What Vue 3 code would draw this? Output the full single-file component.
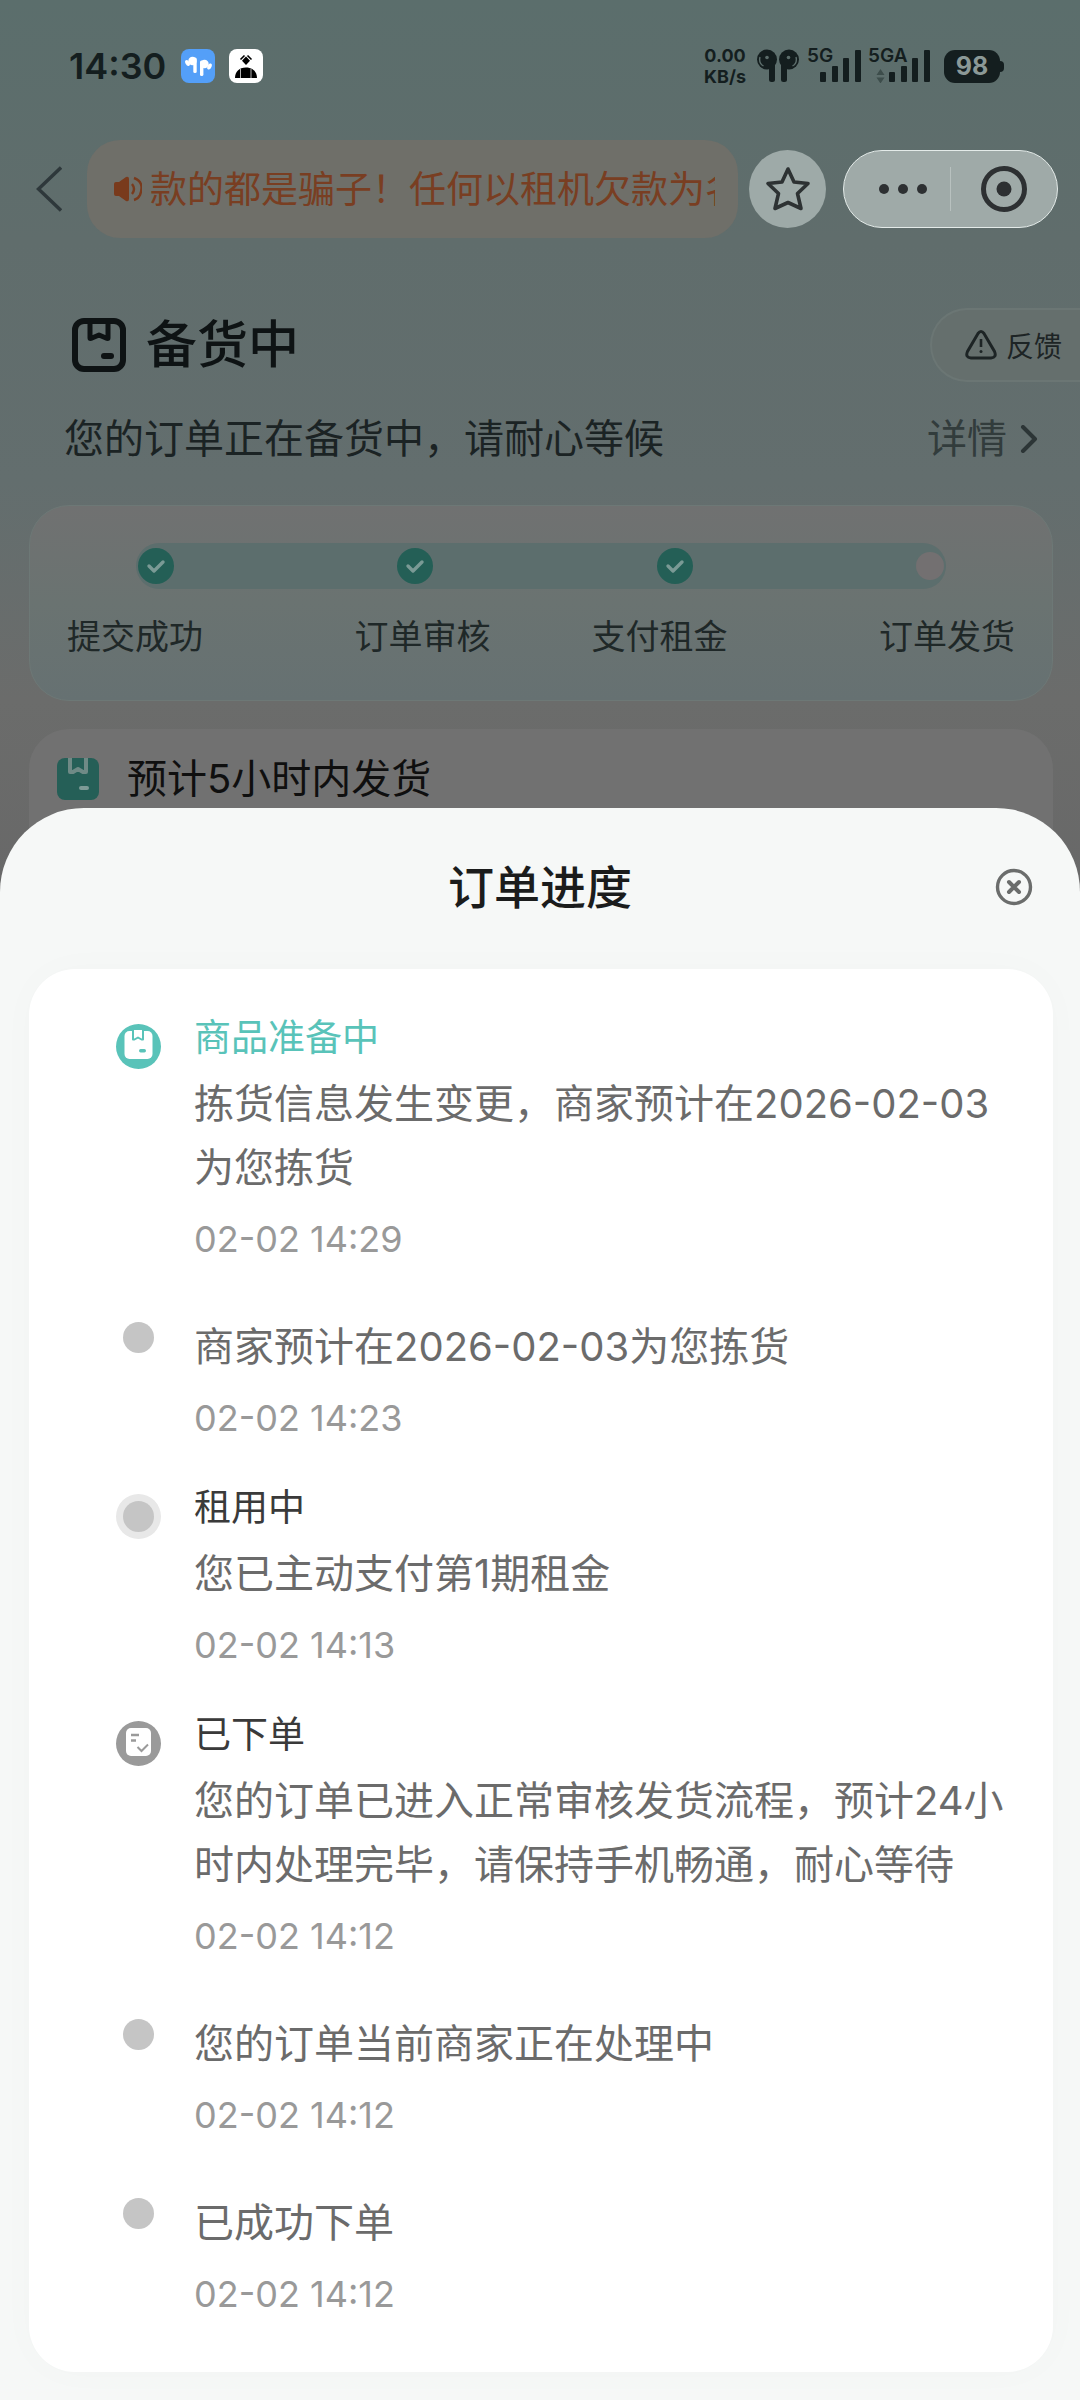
<script setup>
const steps = [
  { label: '提交成功', done: true },
  { label: '订单审核', done: true },
  { label: '支付租金', done: true },
  { label: '订单发货', done: false },
]

const records = [
  { marker: 'box', title: '商品准备中', active: true, text: '拣货信息发生变更，商家预计在2026-02-03为您拣货', time: '02-02 14:29' },
  { marker: 'dot', text: '商家预计在2026-02-03为您拣货', time: '02-02 14:23' },
  { marker: 'ring', title: '租用中', text: '您已主动支付第1期租金', time: '02-02 14:13' },
  { marker: 'note', title: '已下单', text: '您的订单已进入正常审核发货流程，预计24小时内处理完毕，请保持手机畅通，耐心等待', time: '02-02 14:12' },
  { marker: 'dot', text: '您的订单当前商家正在处理中', time: '02-02 14:12' },
  { marker: 'dot', text: '已成功下单', time: '02-02 14:12' },
]
</script>

<template>
  <div class="screen">
    <div class="status">
      <span class="clock">14:30</span>
      <svg class="app-icon" viewBox="0 0 34 34" aria-hidden="true">
        <rect width="34" height="34" rx="8" fill="#549ff8" />
        <g fill="#fff">
          <circle cx="11.5" cy="12" r="4.2" />
          <rect x="12.300" y="8.500" width="3.400" height="15.500" rx="1.600" />
          <ellipse cx="6.500" cy="14" rx="2" ry="3.200" transform="rotate(-30 6.500 14)" />
          <circle cx="23.500" cy="15" r="4.200" />
          <rect x="19" y="11.500" width="3.400" height="15.500" rx="1.600" />
          <ellipse cx="28.500" cy="17.500" rx="2" ry="3.200" transform="rotate(25 28.500 17.500)" />
        </g>
      </svg>
      <svg class="app-icon" viewBox="0 0 34 34" aria-hidden="true">
        <rect width="34" height="34" rx="8" fill="#fff" />
        <path d="M17 7.500l4 4.200-4 4.300-4-4.300z" fill="#000" />
        <path d="M11.500 10.500l4-4M22.500 10.500l-4-4" stroke="#000" stroke-width="1.600" />
        <path d="M6 29c0-6 4-10.500 11-10.500S28 23 28 29z" fill="#000" />
        <path d="M11.500 20v9M22 20v9" stroke="#fff" stroke-width=".7" />
      </svg>
      <span class="spacer"></span>
      <span class="rate"><span>0.00</span><span>KB/s</span></span>
      <svg class="buds" viewBox="0 0 44 34" aria-hidden="true">
        <g fill="#141e1f">
          <circle cx="11" cy="10.500" r="10" />
          <rect x="13" y="4" width="6" height="29" rx="2.500" />
          <circle cx="33" cy="10.500" r="10" />
          <rect x="25" y="4" width="6" height="29" rx="2.500" />
        </g>
        <g fill="none" stroke="#5c6d6b" stroke-width="1.400">
          <path d="M4 8c-1 4 0 7 3.500 9M40 8c1 4 0 7-3.500 9" />
        </g>
        <circle cx="11" cy="8.500" r="1.800" fill="#5c6d6b" />
        <circle cx="32.500" cy="8.500" r="1.800" fill="#5c6d6b" />
      </svg>
      <span class="signal five">
        <span class="net">5G</span>
        <svg viewBox="0 0 54 34" aria-hidden="true"><g fill="#141e1f"><rect x="13" y="23" width="6" height="10" rx="1" /><rect x="25" y="17" width="6" height="16" rx="1" /><rect x="36" y="9" width="6" height="24" rx="1" /><rect x="48" y="1" width="6" height="32" rx="1" /></g></svg>
      </span>
      <span class="signal adv">
        <span class="net">5GA</span>
        <svg viewBox="0 0 62 34" aria-hidden="true"><g fill="#141e1f"><rect x="21" y="23" width="6" height="10" rx="1" /><rect x="33" y="17" width="6" height="16" rx="1" /><rect x="44" y="9" width="6" height="24" rx="1" /><rect x="56" y="1" width="6" height="32" rx="1" /></g><path d="M8.500 26l4-6 4 6zM8.500 28.500l4 6 4-6z" fill="#3d4d4b" /></svg>
      </span>
      <span class="battery">98</span>
    </div>

    <header class="nav">
      <button class="back" aria-label="返回">
        <svg viewBox="0 0 26 46"><path d="M25 1.500L2.500 23 25 44.500" fill="none" stroke="#2e383b" stroke-width="3.400" /></svg>
      </button>
      <div class="notice">
        <svg viewBox="0 0 28 26" aria-hidden="true">
          <path d="M0 8q0-2 2-2h3l7-5q3-1 3 2v20q0 3-3 2l-7-5H2q-2 0-2-2z" fill="#793a1c" />
          <path d="M18 8q4 5 0 10M20 2q11 4 6 17-2 4-6 5" fill="none" stroke="#793a1c" stroke-width="2.400" />
        </svg>
        <p>款的都是骗子！任何以租机欠款为名</p>
      </div>
      <button class="star" aria-label="收藏">
        <svg viewBox="0 0 46 46"><path d="M23 3l6 13 14 1.500-10.500 10L36 42.500l-13-6-13 6 3.500-15L3 17.500 17 16z" fill="none" stroke="#2d3233" stroke-width="3.600" stroke-linejoin="round" /></svg>
      </button>
      <div class="capsule">
        <button class="more" aria-label="更多"><svg class="dots" viewBox="0 0 50 12"><circle cx="6" cy="6" r="5" /><circle cx="25" cy="6" r="5" /><circle cx="44" cy="6" r="5" /></svg></button>
        <i></i>
        <button class="exit" aria-label="关闭小程序"><svg class="target" viewBox="0 0 46 46"><circle cx="23" cy="23" r="20.500" fill="none" stroke="#2d3032" stroke-width="5" /><circle cx="23" cy="23" r="7.500" fill="#2d3032" /></svg></button>
      </div>
    </header>

    <section class="state">
      <svg class="state-icon" viewBox="0 0 54 54" aria-hidden="true">
        <rect x="3" y="3" width="48" height="48" rx="9" fill="none" stroke="#0e1314" stroke-width="6" />
        <path d="M18 4v16q0 1 2 0l7-3 7 3q2 1 2 0V4" fill="none" stroke="#0e1314" stroke-width="5" stroke-linejoin="round" />
        <rect x="29" y="35" width="13" height="6" rx="3" fill="#0e1314" />
      </svg>
      <h1>备货中</h1>
      <button class="feedback">
        <svg viewBox="0 0 32 30" aria-hidden="true"><path d="M13 3.500q3-4 6 0l10.500 18q2.500 6-3.500 6.500H6q-6-.5-3.500-6.500z" fill="none" stroke="#1d2425" stroke-width="3" /><path d="M16 9v8" stroke="#1d2425" stroke-width="2.600" /><circle cx="16" cy="21.500" r="1.500" fill="#1d2425" /></svg>
        反馈
      </button>
    </section>
    <div class="summary">
      <p>您的订单正在备货中，请耐心等候</p>
      <a href="#detail">详情<svg viewBox="0 0 18 28" aria-hidden="true"><path d="M3 2l12 12L3 26" fill="none" stroke="#2c3536" stroke-width="4" stroke-linecap="round" stroke-linejoin="round" /></svg></a>
    </div>

    <section class="card progress">
      <div class="track">
        <template v-for="s in steps" :key="s.label">
          <svg v-if="s.done" class="tick" viewBox="0 0 36 36" aria-hidden="true"><circle cx="18" cy="18" r="18" fill="#245f56" /><path d="M11 18l5 5 9-9" fill="none" stroke="#7a9a95" stroke-width="3.400" stroke-linecap="round" stroke-linejoin="round" /></svg>
          <span v-else class="pending"></span>
        </template>
      </div>
      <ol class="labels"><li v-for="s in steps" :key="s.label">{{ s.label }}</li></ol>
    </section>

    <section class="card eta">
      <svg viewBox="0 0 42 42" aria-hidden="true">
        <rect width="42" height="42" rx="8" fill="#255f57" />
        <path d="M13 0v14h3l5-3 5 3h3V0" fill="none" stroke="#6f8a86" stroke-width="4" stroke-linejoin="round" />
        <rect x="22" y="28" width="10" height="4" rx="2" fill="#7d9a96" />
      </svg>
      <h2>预计5小时内发货</h2>
    </section>

    <section class="sheet" role="dialog" aria-labelledby="sheet-title">
      <header class="sheet-head">
        <h2 id="sheet-title">订单进度</h2>
        <button aria-label="关闭"><svg viewBox="0 0 38 38"><circle cx="19" cy="19" r="16.500" fill="none" stroke="#6b6d6c" stroke-width="3.400" /><path d="M14 14l10 10M24 14L14 24" stroke="#6b6d6c" stroke-width="4" stroke-linecap="round" /></svg></button>
      </header>
      <ol class="timeline">
        <li v-for="(r, i) in records" :key="i" :class="{ plain: !r.title }">
          <span class="marker">
            <svg v-if="r.marker === 'box'" viewBox="0 0 45 45" aria-hidden="true">
              <circle cx="22.500" cy="22.500" r="22.500" fill="#59c3b9" />
              <rect x="8.500" y="7" width="28" height="28" rx="5" fill="#fff" />
              <path d="M17 6v9.500h1.500l3.500-2 3.500 2H27V6" fill="#fff" stroke="#59c3b9" stroke-width="2" stroke-linejoin="round" />
              <rect x="23" y="25" width="7" height="3.500" rx="1.700" fill="#59c3b9" />
            </svg>
            <svg v-else-if="r.marker === 'note'" viewBox="0 0 45 45" aria-hidden="true">
              <circle cx="22.500" cy="22.500" r="22.500" fill="#9a9a9a" />
              <rect x="10" y="7" width="25" height="28" rx="5" fill="#fff" />
              <path d="M15 14h8M15 19.500h5" stroke="#9a9a9a" stroke-width="2.400" />
              <path d="M21.500 26l4 4 6.500-6.500" fill="none" stroke="#9a9a9a" stroke-width="2" />
            </svg>
            <i v-else :class="r.marker"></i>
          </span>
          <div class="entry">
            <h3 v-if="r.title" :class="{ active: r.active }">{{ r.title }}</h3>
            <p>{{ r.text }}</p>
            <time>{{ r.time }}</time>
          </div>
        </li>
      </ol>
    </section>
  </div>
</template>

<style>
body {
  background: #f6f8f7;
}
</style>

<style scoped>
* {
  box-sizing: border-box;
  margin: 0;
  padding: 0;
}
.screen {
  display: flex;
  flex-direction: column;
  min-height: 100vh;
  overflow: hidden;
  font-family: Inter, "Noto Sans CJK SC", sans-serif;
  background: linear-gradient(#5b6e6c 0, #606d6c 240px, #636e6e 480px, #6b6c6b 700px, #686868 900px);
}
svg {
  display: block;
  flex: none;
}
button {
  border: 0;
  background: none;
  font: inherit;
  color: inherit;
}
ol {
  list-style: none;
}
h1, h2, h3 {
  font-weight: 400;
}

.status {
  display: flex;
  align-items: center;
  height: 132px;
  padding: 0 76px 0 69px;
  color: #141e1f;
}
.clock {
  margin-right: 15px;
  font-size: 36px;
  font-weight: 600;
}
.app-icon {
  width: 34px;
  height: 34px;
  margin-right: 14px;
}
.spacer {
  flex: 1;
}
.rate {
  display: flex;
  flex-direction: column;
  align-items: center;
  font-size: 18px;
  font-weight: 700;
  line-height: 21px;
}
.buds {
  width: 44px;
  height: 34px;
  margin: 0 7px 0 10px;
}
.signal {
  position: relative;
  height: 34px;
}
.signal svg {
  height: 34px;
}
.five svg {
  width: 54px;
}
.adv svg {
  width: 62px;
}
.adv {
  margin: 0 14px 0 7px;
}
.net {
  position: absolute;
  top: -3px;
  left: 0;
  font-size: 19px;
  font-weight: 600;
  line-height: 20px;
}
.battery {
  position: relative;
  width: 56px;
  height: 33px;
  margin-right: 4px;
  border-radius: 11px;
  background: #141e1f;
  color: #8b9997;
  font-size: 25px;
  font-weight: 700;
  line-height: 33px;
  text-align: center;
}
.battery::after {
  content: "";
  position: absolute;
  top: 11px;
  right: -4px;
  width: 5px;
  height: 11px;
  border-radius: 0 4px 4px 0;
  background: #141e1f;
}

.nav {
  display: flex;
  align-items: center;
  margin-top: 8px;
  padding: 0 22px 0 36px;
}
.back svg {
  width: 26px;
  height: 46px;
}
.notice {
  flex: 1;
  min-width: 0;
  display: flex;
  align-items: center;
  height: 98px;
  margin: 0 11px 0 25px;
  padding: 0 23px 0 27px;
  border-radius: 33px;
  background: #6f6f69;
  color: #793e22;
}
.notice svg {
  width: 28px;
  height: 26px;
  margin-right: 8px;
}
.notice p {
  flex: 1;
  overflow: hidden;
  padding-top: 2px;
  font-size: 37px;
  line-height: 56px;
  white-space: nowrap;
}
.star {
  display: grid;
  place-items: center;
  width: 77px;
  height: 78px;
  border-radius: 50%;
  background: #9eaaa8;
}
.star svg {
  width: 46px;
  height: 46px;
}
.capsule {
  display: flex;
  align-items: center;
  width: 215px;
  height: 78px;
  margin-left: 17px;
  border: 1px solid #e4ebe9;
  border-radius: 39px;
  background: #9faaa8;
}
.capsule button {
  display: grid;
  place-items: center;
}
.more {
  width: 106px;
  padding-left: 12px;
}
.exit {
  flex: 1;
}
.capsule i {
  width: 1px;
  height: 44px;
  background: #b8c1bf;
}
.dots {
  width: 50px;
  height: 12px;
  fill: #2d3032;
}
.target {
  width: 46px;
  height: 46px;
}

.state {
  display: flex;
  align-items: center;
  height: 74px;
  margin-top: 70px;
  padding-left: 72px;
}
.state-icon {
  width: 54px;
  height: 54px;
}
.state h1 {
  flex: 1;
  margin-left: 20px;
  color: #0e1314;
  font-size: 51px;
  font-weight: 500;
  line-height: 74px;
}
.feedback {
  display: flex;
  align-items: center;
  gap: 9px;
  height: 74px;
  padding: 0 18px 0 33px;
  border: 2px solid #6b7674;
  border-right: 0;
  border-radius: 37px 0 0 37px;
  background: #656f6d;
  color: #1d2425;
  font-size: 28px;
}
.feedback svg {
  width: 32px;
  height: 30px;
}
.summary {
  display: flex;
  justify-content: space-between;
  margin-top: 29px;
  padding: 0 42px 0 64px;
  color: #1b2324;
  font-size: 40px;
  line-height: 56px;
}
.summary a {
  display: flex;
  align-items: center;
  gap: 13px;
  color: #323c3c;
  text-decoration: none;
}
.summary svg {
  width: 18px;
  height: 28px;
}

.card {
  margin: 0 27px 0 29px;
  border-radius: 40px;
}
.progress {
  margin-top: 38px;
  padding: 37px 37px 39px;
  border: 1px solid #6d7876;
  background: linear-gradient(#707171, #6a7371 50%, #667172);
}
.track {
  display: flex;
  align-items: center;
  justify-content: space-between;
  height: 46px;
  margin: 0 69px;
  padding: 0 2px;
  border-radius: 23px;
  background: #5c6e6d;
}
.tick {
  width: 36px;
  height: 36px;
}
.pending {
  width: 28px;
  height: 28px;
  border-radius: 50%;
  background: #737071;
}
.labels {
  display: grid;
  grid-template-columns: repeat(4, 1fr);
  margin-top: 24px;
  color: #1f2828;
  font-size: 34px;
  line-height: 48px;
  text-align: center;
}
.labels li:first-child {
  text-align: left;
}
.labels li:last-child {
  text-align: right;
}
.eta {
  display: flex;
  gap: 28px;
  height: 160px;
  margin-top: 28px;
  padding: 26px 28px 0;
  background: #717171;
}
.eta svg {
  width: 42px;
  height: 42px;
  margin-top: 3px;
}
.eta h2 {
  color: #0f0f0f;
  font-size: 40px;
  line-height: 48px;
}

.sheet {
  position: relative;
  flex: 1;
  margin-top: -81px;
  padding-bottom: 27px;
  border-radius: 84px 84px 0 0;
  background: #f6f8f7;
}
.sheet-head {
  display: grid;
  grid-template-columns: 1fr auto 1fr;
  align-items: center;
  height: 161px;
  padding: 0 47px 4px;
}
.sheet-head h2 {
  grid-column: 2;
  color: #1b1c1c;
  font-size: 46px;
  font-weight: 500;
  line-height: 64px;
}
.sheet-head button {
  justify-self: end;
}
.sheet-head svg {
  width: 38px;
  height: 38px;
}
.timeline {
  display: flex;
  flex-direction: column;
  gap: 40px;
  margin: 0 27px 0 29px;
  padding: 43px 38px 54px 87px;
  border-radius: 46px;
  background: #fff;
  box-shadow: 0 0 40px rgba(0, 0, 0, 0.02);
}
.timeline li {
  display: flex;
  gap: 33px;
}
.marker {
  flex: none;
  display: grid;
  place-items: center;
  width: 45px;
  height: 45px;
  margin-top: 12px;
}
.marker svg {
  width: 45px;
  height: 45px;
}
.dot,
.ring {
  width: 31px;
  height: 31px;
  border-radius: 50%;
  background: #c5c5c5;
}
.ring {
  box-shadow: 0 0 0 7px #e8e8e8;
}
.entry {
  flex: 1;
}
.entry h3 {
  margin-bottom: 8px;
  color: #3a3a3a;
  font-size: 37px;
  line-height: 52px;
}
.entry h3.active {
  color: #59c3b9;
}
.entry p {
  color: #6b6b6b;
  font-size: 40px;
  line-height: 64px;
}
.plain p {
  margin-top: 12px;
}
.entry time {
  display: block;
  margin-top: 15px;
  color: #999;
  font-size: 36px;
  line-height: 48px;
}
</style>
